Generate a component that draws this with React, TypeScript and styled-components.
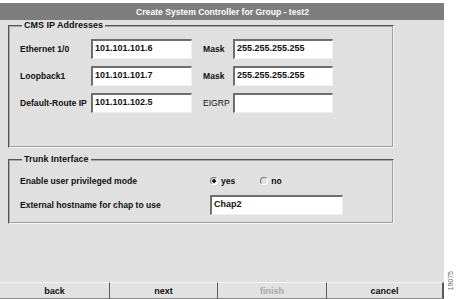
import React, { useState } from "react";
import styled, { createGlobalStyle } from "styled-components";

const GlobalStyle = createGlobalStyle`
  html, body {
    margin: 0;
    padding: 0;
    background: #ffffff;
  }
  body {
    font-family: "Liberation Sans", Arial, sans-serif;
  }
`;

const Page = styled.div`
  width: 456px;
  height: 299px;
  display: flex;
  flex-direction: row;
  overflow: hidden;
`;

const Panel = styled.div`
  width: 444px;
  display: flex;
  flex-direction: column;
  padding-top: 3px;
  box-sizing: border-box;
`;

const TitleBar = styled.div`
  height: 17px;
  background: #7d7d7d;
  color: #ffffff;
  font-size: 8.6px;
  font-weight: bold;
  display: flex;
  align-items: center;
  justify-content: center;
  padding-left: 1px;
`;

const Content = styled.div`
  flex: 1;
  background: #e0e0e0;
  display: flex;
  flex-direction: column;
  padding: 0 50px 0 8px;
`;

const Group = styled.fieldset<{ $height: number }>`
  margin: 0;
  padding: 0 10px;
  height: ${(p) => p.$height}px;
  box-sizing: border-box;
  border: 2px groove #f4f4f4;
  border-top-color: #a8a8a8;
  border-left-color: #a8a8a8;
  min-width: 0;
`;

const Legend = styled.legend`
  font-size: 9px;
  font-weight: bold;
  color: #111;
  padding: 0 2px;
  margin-left: 2px;
  line-height: 11px;
`;

const AddressGrid = styled.div`
  display: grid;
  grid-template-columns: 71px 101px 41px 100px;
  row-gap: 7px;
  margin-top: 8px;
  align-items: center;
`;

const Label = styled.span<{ $bold?: boolean; $gap?: number }>`
  font-size: 8.6px;
  font-weight: ${(p) => (p.$bold === false ? "normal" : "bold")};
  color: #111;
  white-space: nowrap;
  padding-left: ${(p) => p.$gap || 0}px;
`;

const Field = styled.div<{ $width?: number }>`
  height: 20px;
  width: ${(p) => p.$width || 100}px;
  box-sizing: border-box;
  background: #ffffff;
  border-top: 2px solid #6e6e6e;
  border-left: 2px solid #6e6e6e;
  border-right: 1px solid #f0f0f0;
  border-bottom: 1px solid #f0f0f0;
  font-size: 9px;
  font-weight: bold;
  color: #111;
  padding: 1px 2px 0;
  line-height: 12px;
`;

const Spacer = styled.div<{ $h: number }>`
  height: ${(p) => p.$h}px;
  flex-shrink: 0;
`;

const TrunkGrid = styled.div`
  display: grid;
  grid-template-columns: 190px 140px;
  row-gap: 6px;
  margin-top: 8px;
  align-items: center;
`;

const RadioRow = styled.div`
  display: flex;
  flex-direction: row;
  gap: 25px;
  height: 16px;
  align-items: center;
`;

const RadioOption = styled.label`
  display: flex;
  align-items: center;
  gap: 3px;
  font-size: 8.6px;
  font-weight: bold;
  color: #111;
  cursor: pointer;
`;

const RadioDot = styled.span<{ $on: boolean }>`
  width: 8px;
  height: 8px;
  border-radius: 50%;
  box-sizing: border-box;
  border: 1px solid #ffffff;
  border-top-color: #777;
  border-left-color: #777;
  background: ${(p) => (p.$on ? "radial-gradient(circle, #111 0 1.5px, #e0e0e0 2px)" : "#e0e0e0")};
`;

const ButtonBar = styled.div`
  height: 17px;
  display: flex;
  flex-direction: row;
  background: #e0e0e0;
`;

const NavButton = styled.button<{ $width: number; $disabled?: boolean }>`
  width: ${(p) => p.$width}px;
  height: 17px;
  margin: 0;
  padding: 0;
  border: none;
  border-top: 1px solid #f6f6f6;
  border-right: 1px solid #5a5a5a;
  border-bottom: 1px solid #8a8a8a;
  background: #e2e2e2;
  font-family: "Liberation Sans", Arial, sans-serif;
  font-size: 9px;
  font-weight: bold;
  color: ${(p) => (p.$disabled ? "#a6a6a6" : "#111")};
  &:last-child {
    border-right: 2px solid #5a5a5a;
  }
`;

const Side = styled.div`
  flex: 1;
  display: flex;
  flex-direction: column;
  justify-content: flex-end;
  align-items: center;
  padding-bottom: 9px;
`;

const FigureNo = styled.span`
  writing-mode: vertical-rl;
  transform: rotate(180deg);
  font-size: 7px;
  color: #666;
`;

export default function App() {
  const [privileged, setPrivileged] = useState(true);

  return (
    <Page>
      <GlobalStyle />
      <Panel>
        <TitleBar>Create System Controller for Group - test2</TitleBar>
        <Content>
          <Group $height={128}>
            <Legend>CMS IP Addresses</Legend>
            <AddressGrid>
              <Label>Ethernet 1/0</Label>
              <Field $width={101}>101.101.101.6</Field>
              <Label $gap={11}>Mask</Label>
              <Field>255.255.255.255</Field>

              <Label>Loopback1</Label>
              <Field $width={101}>101.101.101.7</Field>
              <Label $gap={11}>Mask</Label>
              <Field>255.255.255.255</Field>

              <Label>Default-Route IP</Label>
              <Field $width={101}>101.101.102.5</Field>
              <Label $gap={11} $bold={false}>EIGRP</Label>
              <Field />
            </AddressGrid>
          </Group>
          <Spacer $h={6} />
          <Group $height={70}>
            <Legend>Trunk Interface</Legend>
            <TrunkGrid>
              <Label>Enable user privileged mode</Label>
              <RadioRow>
                <RadioOption onClick={() => setPrivileged(true)}>
                  <RadioDot $on={privileged} />
                  yes
                </RadioOption>
                <RadioOption onClick={() => setPrivileged(false)}>
                  <RadioDot $on={!privileged} />
                  no
                </RadioOption>
              </RadioRow>
              <Label>External hostname for chap to use</Label>
              <Field $width={133}>Chap2</Field>
            </TrunkGrid>
          </Group>
        </Content>
        <ButtonBar>
          <NavButton $width={110}>back</NavButton>
          <NavButton $width={108}>next</NavButton>
          <NavButton $width={109} $disabled>finish</NavButton>
          <NavButton $width={117}>cancel</NavButton>
        </ButtonBar>
      </Panel>
      <Side>
        <FigureNo>19075</FigureNo>
      </Side>
    </Page>
  );
}
